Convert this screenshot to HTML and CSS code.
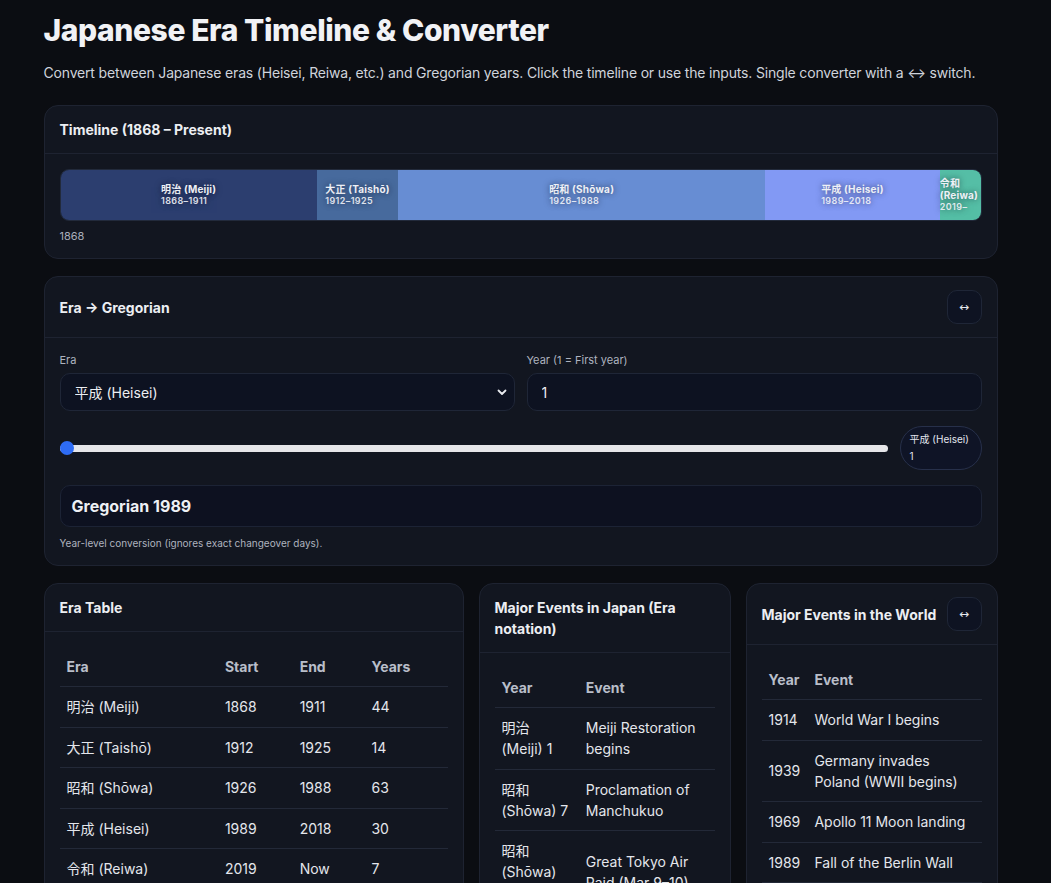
FILE: index.html
```html
<!DOCTYPE html>
<html lang="en">
<head>
<meta charset="utf-8">
<title>Japanese Era Timeline &amp; Converter</title>
<link rel="stylesheet" href="styles.css">
</head>
<body>
<main class="wrap">
  <h1 class="title">Japanese Era Timeline &amp; Converter</h1>
  <p class="lead">Convert between Japanese eras (Heisei, Reiwa, etc.) and Gregorian years. Click the timeline or use the inputs. Single converter with a ↔ switch.</p>

  <section class="card">
    <header class="card-head"><h2>Timeline (1868 – Present)</h2></header>
    <div class="card-body">
      <div class="bar">
        <div class="seg seg-meiji" style="flex-grow:44"><div class="seg-label"><b>明治 (Meiji)</b><span>1868–1911</span></div></div>
        <div class="seg seg-taisho" style="flex-grow:14"><div class="seg-label"><b>大正 (Taishō)</b><span>1912–1925</span></div></div>
        <div class="seg seg-showa" style="flex-grow:63"><div class="seg-label"><b>昭和 (Shōwa)</b><span>1926–1988</span></div></div>
        <div class="seg seg-heisei" style="flex-grow:30"><div class="seg-label"><b>平成 (Heisei)</b><span>1989–2018</span></div></div>
        <div class="seg seg-reiwa" style="flex-grow:7"><div class="seg-label"><b>令和 (Reiwa)</b><span>2019–</span></div></div>
      </div>
      <div class="axis">1868</div>
    </div>
  </section>

  <section class="card">
    <header class="card-head"><h2>Era → Gregorian</h2><button class="swap" type="button">↔</button></header>
    <div class="card-body">
      <div class="fields">
        <label class="field">
          <span class="field-label">Era</span>
          <span class="select-wrap">
            <select class="control">
              <option>明治 (Meiji)</option>
              <option>大正 (Taishō)</option>
              <option>昭和 (Shōwa)</option>
              <option selected>平成 (Heisei)</option>
              <option>令和 (Reiwa)</option>
            </select>
            <svg class="chev" width="12" height="12" viewBox="0 0 12 12"><path d="M2.5 4.5 6 8l3.5-3.5" fill="none" stroke="#e8eaef" stroke-width="1.8" stroke-linecap="round" stroke-linejoin="round"/></svg>
          </span>
        </label>
        <label class="field">
          <span class="field-label">Year (1 = First year)</span>
          <input class="control" type="text" value="1">
        </label>
      </div>
      <div class="slider-row">
        <div class="range"><div class="range-thumb"></div></div>
        <div class="pill">平成 (Heisei)<br>1</div>
      </div>
      <div class="result">Gregorian 1989</div>
      <p class="note">Year-level conversion (ignores exact changeover days).</p>
    </div>
  </section>

  <div class="grid">
    <section class="card">
      <header class="card-head"><h2>Era Table</h2></header>
      <div class="card-body">
        <table class="tbl">
          <thead><tr><th>Era</th><th>Start</th><th>End</th><th>Years</th></tr></thead>
          <tbody>
            <tr><td>明治 (Meiji)</td><td>1868</td><td>1911</td><td>44</td></tr>
            <tr><td>大正 (Taishō)</td><td>1912</td><td>1925</td><td>14</td></tr>
            <tr><td>昭和 (Shōwa)</td><td>1926</td><td>1988</td><td>63</td></tr>
            <tr><td>平成 (Heisei)</td><td>1989</td><td>2018</td><td>30</td></tr>
            <tr><td>令和 (Reiwa)</td><td>2019</td><td>Now</td><td>7</td></tr>
          </tbody>
        </table>
      </div>
    </section>

    <section class="card">
      <header class="card-head"><h2>Major Events in Japan (Era notation)</h2></header>
      <div class="card-body">
        <table class="tbl">
          <thead><tr><th>Year</th><th>Event</th></tr></thead>
          <tbody>
            <tr><td>明治 (Meiji) 1</td><td>Meiji Restoration begins</td></tr>
            <tr><td>昭和 (Shōwa) 7</td><td>Proclamation of Manchukuo</td></tr>
            <tr><td>昭和 (Shōwa) 20</td><td>Great Tokyo Air Raid (Mar 9–10)</td></tr>
            <tr><td>昭和 (Shōwa) 39</td><td>Tokyo Olympics</td></tr>
            <tr><td>平成 (Heisei) 7</td><td>Great Hanshin Earthquake</td></tr>
          </tbody>
        </table>
      </div>
    </section>

    <section class="card">
      <header class="card-head"><h2>Major Events in the World</h2><button class="swap" type="button">↔</button></header>
      <div class="card-body">
        <table class="tbl">
          <thead><tr><th>Year</th><th>Event</th></tr></thead>
          <tbody>
            <tr><td>1914</td><td>World War I begins</td></tr>
            <tr><td>1939</td><td>Germany invades Poland (WWII begins)</td></tr>
            <tr><td>1969</td><td>Apollo 11 Moon landing</td></tr>
            <tr><td>1989</td><td>Fall of the Berlin Wall</td></tr>
            <tr><td>2001</td><td>September 11 attacks</td></tr>
          </tbody>
        </table>
      </div>
    </section>
  </div>
</main>
</body>
</html>
```

FILE: styles.css
```css
* { box-sizing: border-box; }

html, body {
  margin: 0;
  background: #0b0d12;
  color: #e8eaef;
  font-family: Inter, "Noto Sans CJK JP", sans-serif;
}

body {
  padding-right: 10px;
}

.wrap {
  max-width: 954px;
  margin: 0 auto;
  padding: 12px 0 40px;
}

.title {
  margin: 0;
  font-size: 30px;
  line-height: 36px;
  font-weight: 800;
  letter-spacing: -0.4px;
  color: #f1f2f5;
}

.lead {
  margin: 15px 0 22px;
  font-size: 14px;
  line-height: 20px;
  color: #cfd3db;
  letter-spacing: -0.18px;
}

.card {
  background: #121620;
  border: 1px solid #1e2331;
  border-radius: 14px;
  margin-bottom: 17px;
}

.card-head {
  display: flex;
  align-items: center;
  justify-content: space-between;
  gap: 10px;
  padding: 13px 15px;
  border-bottom: 1px solid #1e2331;
}

.card-head h2 {
  margin: 0;
  font-size: 14px;
  line-height: 21px;
  font-weight: 700;
  color: #eceef2;
}

.swap {
  flex: none;
  width: 35px;
  height: 34px;
  border-radius: 10px;
  border: 1px solid #1f2637;
  background: #0e1322;
  color: #e6e8ee;
  font-size: 12px;
  font-family: "DejaVu Sans", sans-serif;
  padding: 0;
}

.card-body {
  padding: 15px;
}

/* timeline */
.bar {
  display: flex;
  height: 52px;
  border-radius: 9px;
  overflow: hidden;
  border: 1px solid #222a3b;
}

.seg {
  flex-basis: 0;
  min-width: 0;
  display: flex;
  align-items: center;
  justify-content: center;
}

.seg-label {
  min-width: 0;
  color: #eef0f6;
  text-shadow: 0 0 6px rgba(10, 14, 30, 0.6);
  font-size: 10px;
  line-height: 12px;
}

.seg-label b {
  display: block;
  font-weight: 700;
  letter-spacing: 0.2px;
}

.seg-label span {
  display: block;
  font-size: 9px;
  font-weight: 600;
  opacity: 0.9;
  letter-spacing: 0.4px;
}

.seg-meiji { background: #2c3e6f; }
.seg-taisho { background: #476a9d; }
.seg-showa { background: #678dd3; }
.seg-heisei { background: #8299f4; }
.seg-reiwa { background: #55bea6; justify-content: flex-start; }

.axis {
  margin-top: 8px;
  font-size: 11px;
  line-height: 14px;
  color: #a9aebb;
}

/* converter */
.fields {
  display: grid;
  grid-template-columns: 1fr 1fr;
  gap: 12px;
}

.field {
  display: flex;
  flex-direction: column;
  gap: 6px;
}

.field-label {
  font-size: 11px;
  line-height: 14px;
  color: #aeb3bf;
}

.select-wrap {
  position: relative;
  display: block;
}

.control {
  width: 100%;
  height: 38px;
  border-radius: 10px;
  border: 1px solid #1f2637;
  background: #0d1221;
  color: #eceef2;
  font-family: Inter, "Noto Sans CJK JP", sans-serif;
  font-size: 14px;
  padding: 0 14px;
  appearance: none;
  -webkit-appearance: none;
  outline: none;
}

.chev {
  position: absolute;
  right: 7px;
  top: 13px;
  pointer-events: none;
}

.slider-row {
  display: flex;
  align-items: center;
  gap: 12px;
  margin-top: 15px;
}

.range {
  flex: 1;
  height: 7px;
  border-radius: 4px;
  background: #e6e6e9;
  display: flex;
  align-items: center;
}

.range-thumb {
  width: 14px;
  height: 14px;
  border-radius: 50%;
  background: #2e6cf5;
}

.pill {
  flex: none;
  width: 82px;
  padding: 4px 9px;
  border-radius: 22px;
  border: 1px solid #27304a;
  background: #0f1426;
  font-size: 10px;
  line-height: 17px;
  color: #e3e6ee;
}

.result {
  margin-top: 15px;
  padding: 10.5px 11px;
  border-radius: 10px;
  border: 1px solid #1c2335;
  background: #0d1120;
  font-size: 16px;
  line-height: 19px;
  font-weight: 700;
  color: #eef0f4;
}

.note {
  margin: 10px 0 1px;
  font-size: 10px;
  line-height: 12px;
  color: #aeb3bf;
}

/* grid of tables */
.grid {
  display: grid;
  grid-template-columns: 5fr 3fr 3fr;
  gap: 15px;
  align-items: start;
}

.grid .card { margin-bottom: 0; }

.tbl {
  width: 100%;
  border-collapse: collapse;
  font-size: 14px;
  line-height: 21px;
}

.tbl th {
  text-align: left;
  font-weight: 700;
  color: #b9bec9;
  padding: 9px 7px;
  border-bottom: 1px solid #232938;
}

.tbl td {
  text-align: left;
  padding: 9.25px 7px;
  color: #e4e6ec;
  border-bottom: 1px solid #232938;
  vertical-align: middle;
}
```
